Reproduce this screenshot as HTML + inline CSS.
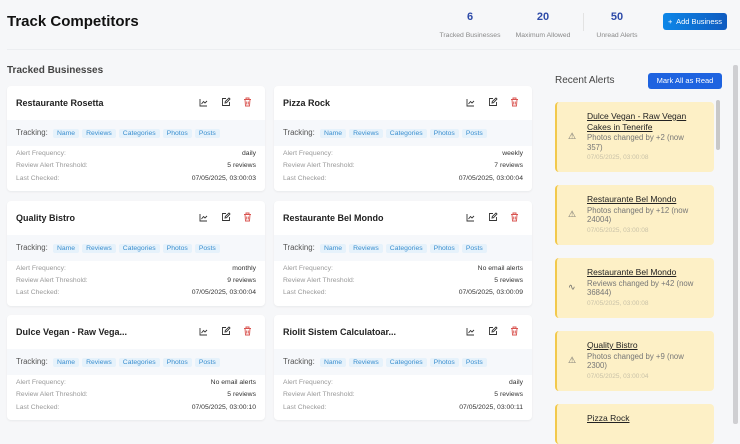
<!DOCTYPE html><html><head><style>
*{box-sizing:border-box;margin:0;padding:0}
body{width:740px;height:424px;overflow:hidden;background:#f6f7f9;font-family:"Liberation Sans",sans-serif;position:relative;color:#222}
.a{position:absolute}
h1{position:absolute;left:7px;top:13px;font-size:15px;font-weight:bold;color:#111}
.st{position:absolute;text-align:center;top:11px}
.st b{display:block;font-size:11px;color:#2d4aa8;font-weight:bold;line-height:13px}
.st span{font-size:6.8px;color:#888}
.btn{position:absolute;background:#1a6fe0;color:#fff;font-size:7.5px;border-radius:3px;text-align:center}
.card{position:absolute;width:258px;height:105px;background:#fff;border-radius:4px;box-shadow:0 1px 2px rgba(0,0,0,.06);overflow:hidden}
.card .t{position:absolute;left:9px;top:12px;font-size:9px;font-weight:bold;color:#222}
.card .tr{position:absolute;left:0;top:34px;width:100%;height:26px;background:#f6f8fb;font-size:7.8px;color:#555;padding:8px 0 0 9px}
.tag{display:inline-block;background:#e6f2fb;color:#3b8fcf;font-size:6.8px;padding:1px 4px;margin-left:3px;border-radius:2px}
.rows{position:absolute;left:9px;right:9px;top:64px;font-size:6.8px;color:#999}
.rows div{height:12.3px;display:flex;justify-content:space-between}
.rows i{font-style:normal;color:#333}
.ic{position:absolute}
.al{position:absolute;left:555px;width:159px;background:#fdf0c6;border-left:2px solid #f2c94c;border-radius:4px}
.al .in{position:absolute;left:30px;top:9px;width:112px}
.al .n{font-size:8.5px;text-decoration:underline;color:#222;line-height:10.5px}
.al .d{font-size:7.8px;color:#777;line-height:9.5px;margin-top:1px}
.al .dt{font-size:6.5px;color:#c9c2a8;line-height:11px}
.al .w{position:absolute;left:11px;font-size:9px;color:#666}
</style></head><body>
<h1>Track Competitors</h1>
<div class="st" style="left:437px;width:66px"><b>6</b><span>Tracked Businesses</span></div>
<div class="st" style="left:510px;width:66px"><b>20</b><span>Maximum Allowed</span></div>
<div class="a" style="left:583px;top:13px;width:1px;height:18px;background:#e3e3e3"></div>
<div class="st" style="left:592px;width:50px"><b>50</b><span>Unread Alerts</span></div>
<div class="btn" style="left:663px;top:13px;width:64px;height:17px;line-height:17px;background:linear-gradient(90deg,#0d87e8,#0f5bc0)">+&nbsp; Add Business</div>
<div class="a" style="left:7px;top:49px;width:733px;height:1px;background:#eceef1"></div>
<div class="a" style="left:7px;top:65px;font-size:10px;font-weight:bold;color:#444">Tracked Businesses</div>
<div class="a" style="left:733px;top:65px;width:5px;height:359px;background:#cfcfd2;border-radius:2px"></div>
<div class="a" style="left:555px;top:75px;font-size:10px;color:#444">Recent Alerts</div>
<div class="btn" style="left:648px;top:73px;width:74px;height:16px;line-height:16px;background:#1e63e0">Mark All as Read</div>
<div class="a" style="left:716px;top:100px;width:4px;height:50px;background:#c8c8c8;border-radius:2px"></div>

<div id="cards"></div>
<script>
var C=[["Restaurante Rosetta","daily","5 reviews","07/05/2025, 03:00:03"],["Pizza Rock","weekly","7 reviews","07/05/2025, 03:00:04"],["Quality Bistro","monthly","9 reviews","07/05/2025, 03:00:04"],["Restaurante Bel Mondo","No email alerts","5 reviews","07/05/2025, 03:00:09"],["Dulce Vegan - Raw Vega...","No email alerts","5 reviews","07/05/2025, 03:00:10"],["Riolit Sistem Calculatoar...","daily","5 reviews","07/05/2025, 03:00:11"]];
var h="";C.forEach(function(c,i){var x=i%2?274:7,y=86+Math.floor(i/2)*114.5;
h+='<div class="card" style="left:'+x+'px;top:'+y+'px"><div class="t">'+c[0]+'</div>'+
'<svg class="ic" style="left:192px;top:12px" width="9" height="9" viewBox="0 0 9 9" fill="none" stroke="#333" stroke-width=".9"><path d="M1 1v7h7M2.5 6l2-2.5 1.5 1.5 2-2"/></svg>'+
'<svg class="ic" style="left:214px;top:11px" width="10" height="10" viewBox="0 0 10 10" fill="none" stroke="#333" stroke-width=".9"><path d="M5 1.5H1.5v7h7V5M4 6l.3-1.5L8 1l1 1-3.5 3.7z"/></svg>'+
'<svg class="ic" style="left:236px;top:11px" width="9" height="10" viewBox="0 0 9 10" fill="none" stroke="#d9534f" stroke-width=".9"><path d="M1 2.5h7M3 2.5V1h3v1.5M2 2.5l.5 6.5h4l.5-6.5M3.7 4.5v3M5.3 4.5v3"/></svg>'+
'<div class="tr">Tracking: <span class="tag">Name</span><span class="tag">Reviews</span><span class="tag">Categories</span><span class="tag">Photos</span><span class="tag">Posts</span></div>'+
'<div class="rows"><div>Alert Frequency:<i>'+c[1]+'</i></div><div>Review Alert Threshold:<i>'+c[2]+'</i></div><div>Last Checked:<i>'+c[3]+'</i></div></div></div>';});
var A=[[102,70,"Dulce Vegan - Raw Vegan Cakes in Tenerife","Photos changed by +2 (now 357)","07/05/2025, 03:00:08","⚠"],[185,60,"Restaurante Bel Mondo","Photos changed by +12 (now 24004)","07/05/2025, 03:00:08","⚠"],[258,60,"Restaurante Bel Mondo","Reviews changed by +42 (now 36844)","07/05/2025, 03:00:08","∿"],[331,60,"Quality Bistro","Photos changed by +9 (now 2300)","07/05/2025, 03:00:04","⚠"],[404,40,"Pizza Rock","","",""]];
A.forEach(function(a){h+='<div class="al" style="top:'+a[0]+'px;height:'+a[1]+'px"><div class="w" style="top:'+(a[1]/2-6)+'px">'+a[5]+'</div><div class="in"><div class="n">'+a[2]+'</div><div class="d">'+a[3]+'</div><div class="dt">'+a[4]+'</div></div></div>';});
document.getElementById("cards").innerHTML=h;
</script>
</body></html>
